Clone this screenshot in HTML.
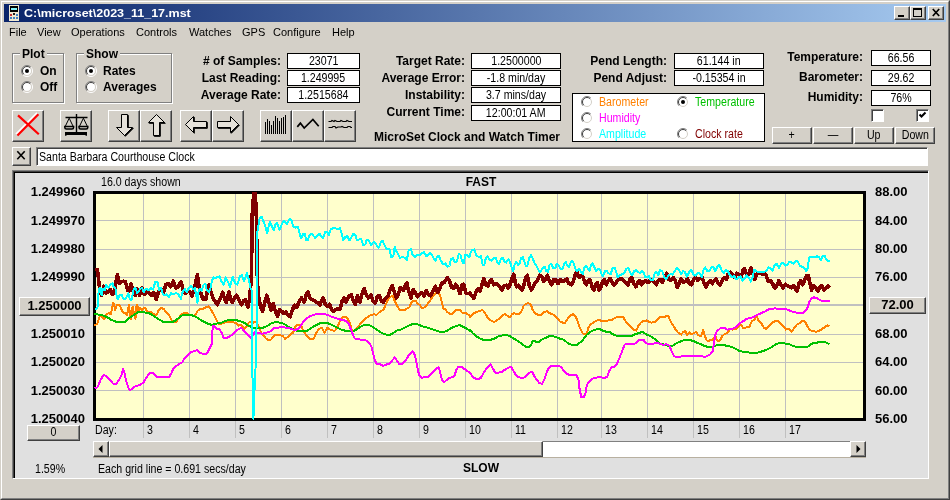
<!DOCTYPE html><html><head><meta charset="utf-8"><title>MicroSet</title><style>
html,body{margin:0;padding:0;}
body{width:950px;height:500px;overflow:hidden;background:#D4D0C8;font-family:"Liberation Sans",sans-serif;font-size:12px;color:#000;position:relative;}
.abs{position:absolute;}
#w{position:absolute;left:0;top:0;width:950px;height:500px;will-change:transform;}
.t{position:absolute;white-space:nowrap;line-height:14px;height:14px;font-size:12px;}
.n{transform:scaleX(.885);transform-origin:0 50%;}
.ns{display:inline-block;transform:scaleX(.885);}
.m{font-size:11px;}
.b{font-weight:bold;}
.r{text-align:right;}
.c{text-align:center;}
.fld{position:absolute;background:#fff;border:1px solid #000;box-sizing:border-box;text-align:center;font-size:12px;line-height:14px;white-space:nowrap;overflow:hidden;}
.btn{position:absolute;box-sizing:border-box;background:#D4D0C8;border:1px solid;border-color:#fff #404040 #404040 #fff;box-shadow:inset -1px -1px 0 #808080;text-align:center;white-space:nowrap;}
.grp{position:absolute;box-sizing:border-box;border:1px solid #808080;box-shadow:1px 1px 0 #fff, inset 1px 1px 0 #fff;}
.rad{position:absolute;width:12px;height:12px;}
svg{position:absolute;overflow:visible;}
</style></head><body><div id="w">
<div class="abs" style="left:0;top:0;width:950px;height:500px;box-sizing:border-box;border:1px solid;border-color:#D4D0C8 #404040 #404040 #D4D0C8;"></div>
<div class="abs" style="left:1px;top:1px;width:948px;height:498px;box-sizing:border-box;border:1px solid;border-color:#fff #808080 #808080 #fff;"></div>
<div class="abs" style="left:4px;top:4px;width:942px;height:18px;background:linear-gradient(to right,#0A246A 0%,#A6CAF0 100%);"></div>
<svg style="left:9px;top:5px" width="10" height="16" viewBox="0 0 10 16" shape-rendering="crispEdges"><rect x="0" y="0" width="10" height="16" fill="#F0E8D0"/><rect x="1" y="1" width="8" height="6" fill="#000"/><rect x="2" y="3" width="6" height="2" fill="#80F0F8"/><rect x="1" y="9" width="2" height="2" fill="#C03030"/><rect x="4" y="8" width="2" height="2" fill="#202020"/><rect x="7" y="9" width="2" height="2" fill="#4080C0"/><rect x="1" y="12" width="2" height="2" fill="#4080C0"/><rect x="4" y="12" width="2" height="2" fill="#4080C0"/><rect x="7" y="12" width="2" height="2" fill="#4080C0"/></svg>
<div class="t b" style="left:24px;top:6px;color:#fff;font-size:11.500px;transform:scaleX(1.087);transform-origin:0 50%;">C:\microset\2023_11_17.mst</div>
<div class="btn" style="left:894px;top:6px;width:16px;height:14px;"></div><div class="abs" style="left:898px;top:15px;width:6px;height:2px;background:#000"></div>
<div class="btn" style="left:910px;top:6px;width:16px;height:14px;"></div><div class="abs" style="left:913px;top:8px;width:9px;height:9px;box-sizing:border-box;border:1px solid #000;border-top-width:2px"></div>
<div class="btn" style="left:928px;top:6px;width:16px;height:14px;"></div><svg style="left:932px;top:9px" width="8" height="7" viewBox="0 0 8 7"><path d="M0.8 0 L7.2 7 M7.2 0 L0.8 7" stroke="#000" stroke-width="1.7" fill="none"/></svg>
<div class="t m" style="left:9px;top:25px;">File</div>
<div class="t m" style="left:37px;top:25px;">View</div>
<div class="t m" style="left:71px;top:25px;">Operations</div>
<div class="t m" style="left:136px;top:25px;">Controls</div>
<div class="t m" style="left:189px;top:25px;">Watches</div>
<div class="t m" style="left:242px;top:25px;">GPS</div>
<div class="t m" style="left:273px;top:25px;">Configure</div>
<div class="t m" style="left:332px;top:25px;">Help</div>
<div class="grp" style="left:12px;top:53px;width:52px;height:50px;"></div>
<div class="t b" style="left:20px;top:47px;background:#D4D0C8;padding:0 2px;">Plot</div>
<svg class="rad" style="left:21px;top:65px" width="12" height="12" viewBox="0 0 12 12"><circle cx="6" cy="6" r="4.5" fill="#fff" stroke="none"/><path d="M2.1 9.9 A5.5 5.5 0 0 1 9.9 2.1" fill="none" stroke="#808080" stroke-width="1"/><path d="M2.8 9.2 A4.5 4.5 0 0 1 9.2 2.8" fill="none" stroke="#404040" stroke-width="1"/><path d="M9.9 2.1 A5.5 5.5 0 0 1 2.1 9.9" fill="none" stroke="#fff" stroke-width="1"/><path d="M9.2 2.8 A4.5 4.5 0 0 1 2.8 9.2" fill="none" stroke="#D4D0C8" stroke-width="1"/><circle cx="6" cy="6" r="2" fill="#000"/></svg>
<div class="t b" style="left:40px;top:64px;">On</div>
<svg class="rad" style="left:21px;top:81px" width="12" height="12" viewBox="0 0 12 12"><circle cx="6" cy="6" r="4.5" fill="#fff" stroke="none"/><path d="M2.1 9.9 A5.5 5.5 0 0 1 9.9 2.1" fill="none" stroke="#808080" stroke-width="1"/><path d="M2.8 9.2 A4.5 4.5 0 0 1 9.2 2.8" fill="none" stroke="#404040" stroke-width="1"/><path d="M9.9 2.1 A5.5 5.5 0 0 1 2.1 9.9" fill="none" stroke="#fff" stroke-width="1"/><path d="M9.2 2.8 A4.5 4.5 0 0 1 2.8 9.2" fill="none" stroke="#D4D0C8" stroke-width="1"/></svg>
<div class="t b" style="left:40px;top:80px;">Off</div>
<div class="grp" style="left:76px;top:53px;width:96px;height:50px;"></div>
<div class="t b" style="left:84px;top:47px;background:#D4D0C8;padding:0 2px;">Show</div>
<svg class="rad" style="left:85px;top:65px" width="12" height="12" viewBox="0 0 12 12"><circle cx="6" cy="6" r="4.5" fill="#fff" stroke="none"/><path d="M2.1 9.9 A5.5 5.5 0 0 1 9.9 2.1" fill="none" stroke="#808080" stroke-width="1"/><path d="M2.8 9.2 A4.5 4.5 0 0 1 9.2 2.8" fill="none" stroke="#404040" stroke-width="1"/><path d="M9.9 2.1 A5.5 5.5 0 0 1 2.1 9.9" fill="none" stroke="#fff" stroke-width="1"/><path d="M9.2 2.8 A4.5 4.5 0 0 1 2.8 9.2" fill="none" stroke="#D4D0C8" stroke-width="1"/><circle cx="6" cy="6" r="2" fill="#000"/></svg>
<div class="t b" style="left:103px;top:64px;">Rates</div>
<svg class="rad" style="left:85px;top:81px" width="12" height="12" viewBox="0 0 12 12"><circle cx="6" cy="6" r="4.5" fill="#fff" stroke="none"/><path d="M2.1 9.9 A5.5 5.5 0 0 1 9.9 2.1" fill="none" stroke="#808080" stroke-width="1"/><path d="M2.8 9.2 A4.5 4.5 0 0 1 9.2 2.8" fill="none" stroke="#404040" stroke-width="1"/><path d="M9.9 2.1 A5.5 5.5 0 0 1 2.1 9.9" fill="none" stroke="#fff" stroke-width="1"/><path d="M9.2 2.8 A4.5 4.5 0 0 1 2.8 9.2" fill="none" stroke="#D4D0C8" stroke-width="1"/></svg>
<div class="t b" style="left:103px;top:80px;">Averages</div>
<div class="t b r" style="left:161px;width:120px;top:54px;"># of Samples:</div>
<div class="fld" style="left:287px;top:53px;width:73px;height:16px;"><span class="ns">23071</span></div>
<div class="t b r" style="left:161px;width:120px;top:71px;">Last Reading:</div>
<div class="fld" style="left:287px;top:70px;width:73px;height:16px;"><span class="ns">1.249995</span></div>
<div class="t b r" style="left:161px;width:120px;top:88px;">Average Rate:</div>
<div class="fld" style="left:287px;top:87px;width:73px;height:16px;"><span class="ns">1.2515684</span></div>
<div class="t b r" style="left:345px;width:120px;top:54px;">Target Rate:</div>
<div class="fld" style="left:471px;top:53px;width:90px;height:16px;"><span class="ns">1.2500000</span></div>
<div class="t b r" style="left:345px;width:120px;top:71px;">Average Error:</div>
<div class="fld" style="left:471px;top:70px;width:90px;height:16px;"><span class="ns">-1.8 min/day</span></div>
<div class="t b r" style="left:345px;width:120px;top:88px;">Instability:</div>
<div class="fld" style="left:471px;top:87px;width:90px;height:16px;"><span class="ns">3.7 mins/day</span></div>
<div class="t b r" style="left:345px;width:120px;top:105px;">Current Time:</div>
<div class="fld" style="left:471px;top:105px;width:90px;height:16px;"><span class="ns">12:00:01 AM</span></div>
<div class="t b" style="left:374px;top:130px;">MicroSet Clock and Watch Timer</div>
<div class="t b r" style="left:547px;width:120px;top:54px;">Pend Length:</div>
<div class="fld" style="left:674px;top:53px;width:90px;height:16px;"><span class="ns">61.144 in</span></div>
<div class="t b r" style="left:547px;width:120px;top:71px;">Pend Adjust:</div>
<div class="fld" style="left:674px;top:70px;width:90px;height:16px;"><span class="ns">-0.15354 in</span></div>
<div class="abs" style="left:572px;top:93px;width:193px;height:49px;box-sizing:border-box;background:#fff;border:1px solid #000;"></div>
<svg class="rad" style="left:581px;top:96px" width="12" height="12" viewBox="0 0 12 12"><circle cx="6" cy="6" r="4.5" fill="#fff" stroke="none"/><path d="M2.1 9.9 A5.5 5.5 0 0 1 9.9 2.1" fill="none" stroke="#808080" stroke-width="1"/><path d="M2.8 9.2 A4.5 4.5 0 0 1 9.2 2.8" fill="none" stroke="#404040" stroke-width="1"/><path d="M9.9 2.1 A5.5 5.5 0 0 1 2.1 9.9" fill="none" stroke="#fff" stroke-width="1"/><path d="M9.2 2.8 A4.5 4.5 0 0 1 2.8 9.2" fill="none" stroke="#D4D0C8" stroke-width="1"/></svg>
<div class="t n" style="left:599px;top:95px;color:#FF8000;">Barometer</div>
<svg class="rad" style="left:677px;top:96px" width="12" height="12" viewBox="0 0 12 12"><circle cx="6" cy="6" r="4.5" fill="#fff" stroke="none"/><path d="M2.1 9.9 A5.5 5.5 0 0 1 9.9 2.1" fill="none" stroke="#808080" stroke-width="1"/><path d="M2.8 9.2 A4.5 4.5 0 0 1 9.2 2.8" fill="none" stroke="#404040" stroke-width="1"/><path d="M9.9 2.1 A5.5 5.5 0 0 1 2.1 9.9" fill="none" stroke="#fff" stroke-width="1"/><path d="M9.2 2.8 A4.5 4.5 0 0 1 2.8 9.2" fill="none" stroke="#D4D0C8" stroke-width="1"/><circle cx="6" cy="6" r="2" fill="#000"/></svg>
<div class="t n" style="left:695px;top:95px;color:#00C000;">Temperature</div>
<svg class="rad" style="left:581px;top:112px" width="12" height="12" viewBox="0 0 12 12"><circle cx="6" cy="6" r="4.5" fill="#fff" stroke="none"/><path d="M2.1 9.9 A5.5 5.5 0 0 1 9.9 2.1" fill="none" stroke="#808080" stroke-width="1"/><path d="M2.8 9.2 A4.5 4.5 0 0 1 9.2 2.8" fill="none" stroke="#404040" stroke-width="1"/><path d="M9.9 2.1 A5.5 5.5 0 0 1 2.1 9.9" fill="none" stroke="#fff" stroke-width="1"/><path d="M9.2 2.8 A4.5 4.5 0 0 1 2.8 9.2" fill="none" stroke="#D4D0C8" stroke-width="1"/></svg>
<div class="t n" style="left:599px;top:111px;color:#FF00FF;">Humidity</div>
<svg class="rad" style="left:581px;top:128px" width="12" height="12" viewBox="0 0 12 12"><circle cx="6" cy="6" r="4.5" fill="#fff" stroke="none"/><path d="M2.1 9.9 A5.5 5.5 0 0 1 9.9 2.1" fill="none" stroke="#808080" stroke-width="1"/><path d="M2.8 9.2 A4.5 4.5 0 0 1 9.2 2.8" fill="none" stroke="#404040" stroke-width="1"/><path d="M9.9 2.1 A5.5 5.5 0 0 1 2.1 9.9" fill="none" stroke="#fff" stroke-width="1"/><path d="M9.2 2.8 A4.5 4.5 0 0 1 2.8 9.2" fill="none" stroke="#D4D0C8" stroke-width="1"/></svg>
<div class="t n" style="left:599px;top:127px;color:#00FFFF;">Amplitude</div>
<svg class="rad" style="left:677px;top:128px" width="12" height="12" viewBox="0 0 12 12"><circle cx="6" cy="6" r="4.5" fill="#fff" stroke="none"/><path d="M2.1 9.9 A5.5 5.5 0 0 1 9.9 2.1" fill="none" stroke="#808080" stroke-width="1"/><path d="M2.8 9.2 A4.5 4.5 0 0 1 9.2 2.8" fill="none" stroke="#404040" stroke-width="1"/><path d="M9.9 2.1 A5.5 5.5 0 0 1 2.1 9.9" fill="none" stroke="#fff" stroke-width="1"/><path d="M9.2 2.8 A4.5 4.5 0 0 1 2.8 9.2" fill="none" stroke="#D4D0C8" stroke-width="1"/></svg>
<div class="t n" style="left:695px;top:127px;color:#800000;">Clock rate</div>
<div class="t b r" style="left:743px;width:120px;top:50px;">Temperature:</div>
<div class="fld" style="left:871px;top:50px;width:60px;height:16px;"><span class="ns">66.56</span></div>
<div class="t b r" style="left:743px;width:120px;top:70px;">Barometer:</div>
<div class="fld" style="left:871px;top:70px;width:60px;height:16px;"><span class="ns">29.62</span></div>
<div class="t b r" style="left:743px;width:120px;top:90px;">Humidity:</div>
<div class="fld" style="left:871px;top:90px;width:60px;height:16px;"><span class="ns">76%</span></div>
<div class="abs" style="left:871px;top:109px;width:13px;height:13px;box-sizing:border-box;background:#fff;border:1px solid;border-color:#808080 #fff #fff #808080;box-shadow:inset 1px 1px 0 #404040;"></div>
<div class="abs" style="left:916px;top:109px;width:13px;height:13px;box-sizing:border-box;background:#fff;border:1px solid;border-color:#808080 #fff #fff #808080;box-shadow:inset 1px 1px 0 #404040;"></div><svg style="left:919px;top:112px" width="7" height="7" viewBox="0 0 7 7"><path d="M0.5 2.5 L2.5 4.5 L6.5 0.5" stroke="#000" stroke-width="2" fill="none"/></svg>
<div class="btn" style="left:772px;top:127px;width:40px;height:17px;line-height:14px;"><span class="ns">+</span></div>
<div class="btn" style="left:813px;top:127px;width:40px;height:17px;line-height:14px;"><span class="ns">&mdash;</span></div>
<div class="btn" style="left:854px;top:127px;width:40px;height:17px;line-height:14px;"><span class="ns">Up</span></div>
<div class="btn" style="left:895px;top:127px;width:40px;height:17px;line-height:14px;"><span class="ns">Down</span></div>
<div class="btn" style="left:12px;top:110px;width:32px;height:32px;"></div>
<svg style="left:12px;top:110px" width="32" height="32" viewBox="0 0 32 32"><path d="M26.400 4.200 L5.400 25.400" stroke="#fff" stroke-width="2" fill="none" transform="translate(-1.300,-1.300)"/><path d="M6 5.4 L26.8 24.3 M26.4 4.2 L5.4 25.4" stroke="#FF0000" stroke-width="2.2" fill="none"/></svg>
<div class="btn" style="left:60px;top:110px;width:32px;height:32px;"></div>
<svg style="left:60px;top:110px" width="32" height="32" viewBox="0 0 32 32"><path d="M16.500 4 V22.500 M5.500 7.500 H27.500" stroke="#000" stroke-width="1.4" fill="none"/><path d="M9.200 8.200 L5.200 16.500 M9.200 8.200 L13.200 16.500 M23.400 8.200 L19.400 16.500 M23.400 8.200 L27.400 16.500" stroke="#000" stroke-width="1" fill="none"/><path d="M4.800 16.500 H13.600 V17.500 Q13.600 19 12 19 H6.400 Q4.800 19 4.800 17.500 Z M19 16.500 H27.800 V17.500 Q27.800 19 26.200 19 H20.600 Q19 19 19 17.500 Z" fill="#D4D0C8" stroke="#000" stroke-width="1.5"/><path d="M5 22 H27 V25.800 H25.500 V25 H6.500 V25.800 H5 Z" fill="#000"/></svg>
<div class="btn" style="left:108px;top:110px;width:32px;height:32px;"></div>
<svg style="left:108px;top:110px" width="32" height="32" viewBox="0 0 32 32"><path d="M13.500 4.500 H19.500 V17.500 H24.500 L16.500 25.500 L8.500 17.500 H13.500 Z" fill="#000" stroke="#000" stroke-width="1" transform="translate(0.800,0.800)"/><path d="M13.500 4.500 H19.500 V17.500 H24.500 L16.500 25.500 L8.500 17.500 H13.500 Z" fill="#E6E2DA" stroke="#000" stroke-width="1"/></svg>
<div class="btn" style="left:140px;top:110px;width:32px;height:32px;"></div>
<svg style="left:140px;top:110px" width="32" height="32" viewBox="0 0 32 32"><path d="M13.500 25.500 H19.500 V12.500 H24.500 L16.500 4.500 L8.500 12.500 H13.500 Z" fill="#000" stroke="#000" stroke-width="1" transform="translate(0.800,0.800)"/><path d="M13.500 25.500 H19.500 V12.500 H24.500 L16.500 4.500 L8.500 12.500 H13.500 Z" fill="#E6E2DA" stroke="#000" stroke-width="1"/></svg>
<div class="btn" style="left:180px;top:110px;width:32px;height:32px;"></div>
<svg style="left:180px;top:110px" width="32" height="32" viewBox="0 0 32 32"><path d="M26.500 11.500 V17.500 H13.500 V22.500 L5.500 14.500 L13.500 6.500 V11.500 Z" fill="#000" stroke="#000" stroke-width="1" transform="translate(0.800,0.800)"/><path d="M26.500 11.500 V17.500 H13.500 V22.500 L5.500 14.500 L13.500 6.500 V11.500 Z" fill="#E6E2DA" stroke="#000" stroke-width="1"/></svg>
<div class="btn" style="left:212px;top:110px;width:32px;height:32px;"></div>
<svg style="left:212px;top:110px" width="32" height="32" viewBox="0 0 32 32"><path d="M5.500 11.500 V17.500 H18.500 V22.500 L26.500 14.500 L18.500 6.500 V11.500 Z" fill="#000" stroke="#000" stroke-width="1" transform="translate(0.800,0.800)"/><path d="M5.500 11.500 V17.500 H18.500 V22.500 L26.500 14.500 L18.500 6.500 V11.500 Z" fill="#E6E2DA" stroke="#000" stroke-width="1"/></svg>
<div class="btn" style="left:260px;top:110px;width:32px;height:32px;"></div>
<svg style="left:260px;top:110px" width="32" height="32" viewBox="0 0 32 32"><g shape-rendering="crispEdges"><rect x="5" y="12" width="1" height="12" fill="#000"/><rect x="7" y="9" width="1" height="15" fill="#000"/><rect x="9" y="11" width="1" height="13" fill="#000"/><rect x="11" y="15" width="1" height="9" fill="#000"/><rect x="13" y="11" width="1" height="13" fill="#000"/><rect x="15" y="6" width="1" height="18" fill="#000"/><rect x="17" y="8" width="1" height="16" fill="#000"/><rect x="19" y="11" width="1" height="13" fill="#000"/><rect x="21" y="8" width="1" height="16" fill="#000"/><rect x="23" y="7" width="1" height="17" fill="#000"/><rect x="25" y="5" width="1" height="19" fill="#000"/></g></svg>
<div class="btn" style="left:292px;top:110px;width:32px;height:32px;"></div>
<svg style="left:292px;top:110px" width="32" height="32" viewBox="0 0 32 32"><path d="M5.300 16.900 L8.400 13.200 L12.200 18 L20.900 9.400 L26.700 16.300" stroke="#000" stroke-width="1.7" fill="none"/></svg>
<div class="btn" style="left:324px;top:110px;width:32px;height:32px;"></div>
<svg style="left:324px;top:110px" width="32" height="32" viewBox="0 0 32 32"><path d="M4.500 11.500 H7 L8 10.500 L10 11.500 L11 10.500 L13 11.500 H16 L17 10.500 L19 11.500 H22 L23 10.500 L25 11.500 H28 M4.500 17.500 H8 L9 16.500 H11 L12 18 L14 17 H17 L18 16.500 L20 17.500 H23 L24 16.500 L26 16.500 L27 17.500 H28" stroke="#000" stroke-width="1.2" fill="none"/></svg>
<div class="btn" style="left:12px;top:147px;width:19px;height:19px;"></div>
<svg style="left:16px;top:150px" width="10" height="10" viewBox="0 0 10 10"><path d="M1.300 1.300 L8.700 9.300 M8.700 1.300 L1.300 9.300" stroke="#000" stroke-width="1.600" fill="none"/></svg>
<div class="abs" style="left:36px;top:147px;width:892px;height:19px;box-sizing:border-box;background:#fff;border:1px solid;border-color:#808080 #fff #fff #808080;box-shadow:inset 1px 1px 0 #404040;"></div>
<div class="t n" style="left:39px;top:150px;">Santa Barbara Courthouse Clock</div>
<div class="abs" style="left:12px;top:170px;width:917px;height:309px;box-sizing:border-box;background:#E0E0E0;border:1px solid;border-color:#808080 #fff #fff #808080;box-shadow:inset 1px 1px 0 #404040, inset 2px 2px 0 #000;"></div>
<div class="t n" style="left:101px;top:175px;">16.0 days shown</div>
<div class="t b c" style="left:431px;width:100px;top:175px;">FAST</div>
<div class="t b c" style="left:431px;width:100px;top:461px;">SLOW</div>
<div class="t n" style="left:35px;top:462px;">1.59%</div>
<div class="t n" style="left:98px;top:462px;">Each grid line = 0.691 secs/day</div>
<div class="t b r" style="left:14px;width:71px;top:185px;font-size:13px;">1.249960</div>
<div class="t b" style="left:875px;top:185px;font-size:13px;">88.00</div>
<div class="t b r" style="left:14px;width:71px;top:214px;font-size:13px;">1.249970</div>
<div class="t b" style="left:875px;top:214px;font-size:13px;">84.00</div>
<div class="t b r" style="left:14px;width:71px;top:242px;font-size:13px;">1.249980</div>
<div class="t b" style="left:875px;top:242px;font-size:13px;">80.00</div>
<div class="t b r" style="left:14px;width:71px;top:270px;font-size:13px;">1.249990</div>
<div class="t b" style="left:875px;top:270px;font-size:13px;">76.00</div>
<div class="btn b" style="left:19px;top:297px;width:71px;height:19px;line-height:16px;font-size:13px;">1.250000</div>
<div class="btn b" style="left:869px;top:297px;width:57px;height:17px;line-height:14px;font-size:13px;">72.00</div>
<div class="t b r" style="left:14px;width:71px;top:327px;font-size:13px;">1.250010</div>
<div class="t b" style="left:875px;top:327px;font-size:13px;">68.00</div>
<div class="t b r" style="left:14px;width:71px;top:355px;font-size:13px;">1.250020</div>
<div class="t b" style="left:875px;top:355px;font-size:13px;">64.00</div>
<div class="t b r" style="left:14px;width:71px;top:384px;font-size:13px;">1.250030</div>
<div class="t b" style="left:875px;top:384px;font-size:13px;">60.00</div>
<div class="t b r" style="left:14px;width:71px;top:412px;font-size:13px;">1.250040</div>
<div class="t b" style="left:875px;top:412px;font-size:13px;">56.00</div>
<div class="btn" style="left:27px;top:425px;width:53px;height:16px;line-height:13px;"><span class="ns">0</span></div>
<div class="t n" style="left:95px;top:423px;">Day:</div>
<div class="abs" style="left:93px;top:191px;width:773px;height:230px;box-sizing:border-box;background:#FFFFCC;border:3px solid #000;"></div>
<svg style="left:0;top:0" width="950" height="500" viewBox="0 0 950 500" shape-rendering="crispEdges"><rect x="143" y="194" width="1" height="244" fill="#C0C0C0"/><rect x="189" y="194" width="1" height="244" fill="#C0C0C0"/><rect x="235" y="194" width="1" height="244" fill="#C0C0C0"/><rect x="281" y="194" width="1" height="244" fill="#C0C0C0"/><rect x="327" y="194" width="1" height="244" fill="#C0C0C0"/><rect x="373" y="194" width="1" height="244" fill="#C0C0C0"/><rect x="419" y="194" width="1" height="244" fill="#C0C0C0"/><rect x="465" y="194" width="1" height="244" fill="#C0C0C0"/><rect x="511" y="194" width="1" height="244" fill="#C0C0C0"/><rect x="557" y="194" width="1" height="244" fill="#C0C0C0"/><rect x="601" y="194" width="1" height="244" fill="#C0C0C0"/><rect x="647" y="194" width="1" height="244" fill="#C0C0C0"/><rect x="693" y="194" width="1" height="244" fill="#C0C0C0"/><rect x="739" y="194" width="1" height="244" fill="#C0C0C0"/><rect x="785" y="194" width="1" height="244" fill="#C0C0C0"/><rect x="96" y="220" width="767" height="1" fill="#C0C0C0"/><rect x="96" y="249" width="767" height="1" fill="#C0C0C0"/><rect x="96" y="277" width="767" height="1" fill="#C0C0C0"/><rect x="96" y="304" width="767" height="2" fill="#C0C0C0"/><rect x="96" y="334" width="767" height="1" fill="#C0C0C0"/><rect x="96" y="362" width="767" height="1" fill="#C0C0C0"/><rect x="96" y="390" width="767" height="1" fill="#C0C0C0"/><rect x="93" y="418" width="773" height="3" fill="#000"/><clipPath id="cp"><rect x="94" y="191" width="771" height="230"/></clipPath><g clip-path="url(#cp)" fill="none" stroke-linejoin="round"><polyline points="94.1,325.4 97.1,324.1 98.3,320.3 99.6,316.9 101.3,315.3 102.5,317.8 104.2,319.1 105.5,316.9 106.7,314.0 108.8,313.2 110.9,314.0 112.2,308.1 113.1,302.6 114.1,303.5 114.9,309.8 116.0,308.1 116.8,305.2 118.9,304.7 120.6,307.3 122.3,311.1 124.0,312.7 125.7,313.2 126.9,314.8 128.2,310.2 128.8,304.7 129.6,310.2 130.3,315.3 130.9,319.1 131.6,315.3 132.3,307.7 133.1,306.8 133.7,312.7 134.5,316.1 135.4,319.1 136.0,314.4 136.6,304.7 137.5,305.6 138.1,309.8 139.2,310.6 140.2,308.1 141.3,309.4 142.5,310.2 144.2,307.7 145.5,308.5 146.7,311.1 148.0,311.9 149.3,311.7 150.9,312.1 152.6,313.2 154.3,314.4 156.0,314.8 157.3,314.0 158.5,310.2 160.2,308.5 161.9,308.4 163.6,308.7 164.8,310.6 166.5,312.3 168.6,314.4 170.3,317.8 171.6,320.3 173.2,321.6 176.3,321.6 178.4,318.4 181.6,314.2 184.7,312.7 187.3,313.2 190.0,315.3 193.2,315.7 195.3,315.3 197.4,311.1 199.5,309.4 202.6,308.9 205.8,307.3 208.9,306.4 211.1,310.0 214.2,315.3 216.3,319.5 218.4,323.7 221.6,323.7 224.7,322.6 227.9,321.6 231.1,321.6 234.2,322.6 236.3,322.6 238.4,325.8 240.5,324.7 242.6,326.8 244.7,328.9 246.8,325.8 248.9,322.6 251.1,321.6 253.2,322.6 255.3,321.6 257.4,323.7 259.5,328.9 261.6,333.2 263.7,335.3 265.8,338.4 267.9,340.1 271.1,339.5 273.2,336.3 275.3,334.6 278.4,335.3 280.0,335.4 282.5,335.8 285.3,338.9 288.0,336.8 290.5,334.1 293.1,332.6 295.8,325.7 298.5,324.8 301.1,325.7 303.2,330.5 305.3,333.7 307.4,336.8 309.5,338.9 313.7,338.9 315.8,333.7 317.9,330.5 320.0,328.4 322.1,327.8 324.2,332.6 325.9,330.5 327.4,327.8 330.1,329.5 332.6,330.5 335.2,330.5 337.3,327.4 339.4,322.1 341.5,318.9 343.2,316.8 345.7,316.8 347.8,318.9 349.9,323.2 352.0,330.5 354.7,330.5 357.5,327.8 360.0,324.2 362.5,321.1 365.3,318.9 368.0,316.8 370.5,315.2 373.7,314.3 376.8,314.7 379.4,312.2 382.1,310.5 384.2,308.4 386.3,303.2 388.4,298.9 390.5,296.8 392.6,295.8 394.7,301.1 396.8,305.3 398.9,308.8 401.1,310.5 404.2,310.1 407.4,308.4 409.5,307.4 410.9,303.2 413.1,301.1 415.8,301.1 417.9,303.8 420.0,305.3 422.1,308.0 424.2,307.4 427.4,304.2 429.9,301.1 432.0,297.9 434.1,294.7 436.8,292.6 439.6,294.1 441.1,298.9 443.2,308.4 445.3,309.5 447.4,312.2 450.1,313.7 452.6,313.7 455.2,310.5 457.9,309.5 460.0,310.1 462.1,312.6 465.3,312.6 468.4,314.7 470.0,316.7 473.2,313.8 476.3,312.1 479.5,311.1 482.6,310.0 485.2,313.2 487.9,318.4 491.1,320.5 494.2,322.2 496.3,320.5 499.1,318.8 502.0,316.3 504.7,313.8 506.8,315.3 509.6,317.4 512.1,314.2 514.2,313.2 516.3,313.8 518.8,314.2 521.6,311.1 523.7,305.8 525.8,303.7 528.5,303.3 530.6,304.1 532.7,310.0 535.3,313.2 538.4,315.3 541.6,314.6 544.1,312.1 546.8,311.1 549.6,313.2 552.1,314.2 554.6,315.3 557.4,318.4 560.1,321.6 562.6,322.6 565.2,322.6 567.9,318.4 570.6,315.3 573.2,314.2 575.7,316.7 577.8,321.6 579.9,327.9 582.6,333.2 585.4,334.8 586.8,333.2 588.3,327.9 590.4,324.7 593.2,322.6 596.3,320.9 598.8,319.5 600.5,320.5 603.7,320.9 606.8,320.9 609.4,320.1 612.1,320.1 614.8,318.0 617.4,316.7 620.5,316.7 623.3,317.4 625.4,320.9 627.9,323.7 631.1,327.3 633.8,330.0 636.3,330.6 638.4,325.8 640.9,322.6 643.7,320.9 646.4,320.5 648.9,321.6 651.5,322.6 654.2,322.2 656.9,320.5 660.0,316.9 663.2,317.4 665.9,316.3 668.4,315.9 670.5,321.2 672.6,324.7 675.2,328.9 677.9,332.5 681.1,334.6 683.2,332.1 685.3,331.1 687.4,335.3 689.5,332.1 691.6,334.2 693.7,333.2 696.2,332.1 698.3,335.3 701.1,335.9 703.2,330.0 704.6,335.3 706.7,340.5 709.5,340.5 712.6,340.1 715.2,335.9 717.3,340.5 720.0,340.5 722.1,336.3 724.8,333.8 727.4,333.2 729.9,328.9 732.6,329.6 735.8,328.9 738.9,325.8 741.1,324.7 743.2,327.9 746.3,327.5 749.5,326.8 751.6,321.6 754.3,319.5 756.8,316.3 758.9,321.2 761.5,323.7 764.2,327.9 766.3,328.9 769.1,326.2 771.6,323.3 774.7,321.2 777.9,320.5 780.4,323.3 783.2,326.2 785.9,329.6 788.8,328.9 791.6,331.5 794.3,327.9 796.8,324.7 798.9,323.7 802.1,320.5 804.8,321.2 807.4,326.2 809.9,330.0 812.6,331.1 815.8,331.7 818.9,331.1 822.1,328.9 825.3,326.8 827.4,325.4 829.5,326.2" stroke="#FF8000" stroke-width="2"/><polyline points="94.1,314.4 96.2,313.6 98.7,314.8 101.3,315.1 103.8,315.7 106.3,316.8 108.8,318.2 111.4,319.9 113.9,321.0 117.3,322.0 120.6,322.2 124.0,322.0 125.7,321.6 127.4,319.9 129.1,318.2 131.2,316.8 133.3,315.3 135.8,313.6 137.9,312.3 140.4,311.7 142.5,312.1 145.1,312.6 147.6,312.9 150.1,313.7 152.6,315.3 155.2,316.8 157.7,318.6 160.2,320.1 162.7,321.6 165.3,322.0 168.6,322.0 172.0,322.0 174.2,321.2 177.4,319.1 180.5,316.3 183.7,314.8 186.8,314.6 190.0,314.8 193.2,315.7 196.3,316.9 199.5,319.1 202.6,321.2 205.8,322.6 208.9,324.1 212.1,324.9 215.3,323.7 218.4,323.3 221.6,322.6 224.7,321.2 227.9,320.1 231.1,319.9 235.3,320.1 238.4,320.7 241.6,321.6 244.7,323.1 247.9,325.4 251.1,326.8 254.2,327.9 258.4,328.3 262.6,327.9 266.8,326.2 270.0,324.1 273.2,322.6 276.3,322.2 279.5,322.6 280.0,322.7 283.2,323.6 286.3,325.3 289.5,327.4 292.6,329.1 295.8,330.5 298.9,330.9 303.2,330.9 307.4,330.7 310.5,328.4 313.7,326.3 316.8,324.8 320.0,323.2 323.2,322.7 326.3,322.7 329.5,323.8 332.6,325.3 335.8,326.9 338.9,328.4 342.1,329.9 345.3,330.7 349.5,331.2 352.6,331.6 355.8,329.9 358.9,327.8 362.1,325.7 365.3,324.8 368.4,324.8 371.6,326.3 374.7,328.4 377.9,330.5 381.1,332.6 384.2,334.1 387.4,334.7 390.5,334.7 393.7,332.6 396.8,330.5 400.0,329.9 403.2,328.4 406.3,326.9 409.5,325.3 412.6,324.0 415.8,323.8 418.9,324.8 422.1,326.3 425.3,326.9 428.4,328.0 431.6,329.1 434.7,330.1 437.9,331.2 441.1,332.0 444.2,332.0 447.4,330.5 450.5,328.4 453.7,326.9 456.8,325.7 460.0,325.3 463.2,326.9 466.3,328.4 469.5,330.5 470.0,329.9 473.2,333.7 476.3,336.2 479.5,338.3 482.6,339.6 486.8,339.6 491.1,339.6 494.2,338.9 497.4,336.8 500.5,335.8 503.7,335.2 506.8,335.2 510.0,336.2 513.2,338.3 516.3,340.0 519.5,342.1 522.6,344.6 525.8,346.7 528.9,347.4 531.1,345.3 532.7,341.1 534.8,341.1 536.9,342.5 539.5,341.7 542.6,338.9 545.8,337.9 548.9,336.2 552.1,335.8 555.3,336.8 558.4,338.3 561.6,338.9 564.7,340.4 567.9,343.2 571.1,344.6 574.2,344.6 577.4,344.6 580.5,342.1 583.7,338.9 586.8,334.7 590.0,332.0 593.2,330.5 596.3,329.5 599.5,329.1 602.6,330.5 605.8,331.6 608.9,331.6 612.1,333.7 615.3,335.4 618.4,335.8 621.6,335.8 626.8,335.8 632.1,335.8 635.3,334.1 638.4,333.3 641.6,332.0 643.7,332.6 646.8,334.7 650.0,335.8 653.2,337.9 656.3,340.4 659.5,343.2 660.0,343.7 663.2,344.3 666.3,345.2 669.5,346.4 672.6,345.8 675.8,343.7 678.9,342.2 682.1,340.9 685.3,339.9 688.4,339.9 691.6,340.5 694.7,341.6 697.9,343.1 701.1,344.3 704.2,345.8 707.4,346.8 710.5,346.8 713.7,346.4 716.8,345.2 720.0,344.7 723.2,344.7 726.3,345.8 729.5,346.4 732.6,347.3 735.8,348.9 738.9,350.6 742.1,351.5 745.3,352.1 748.4,352.5 751.6,352.7 754.7,352.7 757.9,352.5 761.1,351.7 764.2,350.6 767.4,349.4 770.5,347.9 773.7,345.8 776.8,343.7 780.0,343.1 783.2,343.1 786.3,343.7 789.5,344.3 792.6,345.8 795.8,346.8 798.9,347.5 802.1,347.3 805.3,346.8 808.4,346.4 810.5,344.3 813.7,343.1 816.8,342.6 820.0,342.2 823.2,342.0 826.3,342.6 829.5,344.3" stroke="#00C000" stroke-width="2"/><polyline points="94.6,388.4 97.4,387.4 100.5,380.0 103.7,374.7 106.8,376.8 110.0,380.0 113.2,383.8 116.3,383.8 119.5,378.9 121.6,374.7 123.1,368.8 124.7,373.7 126.2,381.1 128.9,389.5 131.1,389.5 134.2,386.9 137.4,385.7 140.5,384.8 143.7,382.1 146.8,376.8 150.0,372.6 153.2,373.1 156.3,376.4 159.5,377.5 162.6,377.3 165.8,376.8 168.9,377.3 171.1,373.7 173.2,368.8 176.3,365.9 179.5,363.8 182.6,362.1 184.7,357.9 187.9,354.7 191.1,352.0 194.2,351.2 196.9,350.1 199.5,352.6 202.6,353.7 206.8,353.7 209.6,348.4 211.7,344.2 212.7,326.3 214.2,325.9 216.3,328.8 219.5,329.5 221.6,332.6 223.7,337.9 226.8,337.9 230.0,336.4 233.2,333.7 236.3,330.5 239.5,328.8 241.6,328.0 244.7,331.6 247.9,334.7 251.1,338.5 253.2,334.7 255.3,331.6 258.4,333.1 262.6,333.7 266.8,332.6 270.0,331.6 273.2,328.4 276.3,328.0 279.5,327.4 280.0,326.9 283.2,326.9 286.3,327.8 289.5,328.4 292.6,329.5 295.8,329.9 298.9,328.4 301.1,325.3 303.2,322.1 306.3,318.5 309.5,316.4 312.6,315.2 315.8,314.3 320.0,314.3 324.2,314.3 327.4,314.7 330.5,316.4 333.7,317.3 336.8,318.5 340.0,319.4 343.2,320.0 346.3,321.1 348.4,323.2 350.5,328.4 352.6,333.7 354.7,338.5 357.9,339.4 361.1,339.6 364.2,339.6 367.4,341.1 369.5,343.2 371.6,347.4 373.1,353.7 374.7,360.0 376.8,363.8 380.0,364.2 383.2,365.9 386.3,364.6 389.5,363.6 392.6,360.0 394.7,357.5 396.8,360.4 398.9,363.8 402.1,364.2 405.3,361.1 408.4,355.8 410.5,353.3 412.6,351.2 414.7,354.7 416.4,362.1 417.9,370.5 419.4,375.8 422.1,377.9 425.3,376.8 428.4,376.8 431.2,373.7 433.7,371.6 436.8,368.4 438.9,367.4 440.4,373.7 442.1,380.0 444.2,382.1 446.7,380.0 449.5,377.9 453.1,376.8 454.7,375.2 456.4,369.5 458.5,366.7 461.1,366.7 463.6,368.4 466.3,370.1 469.5,372.6 470.0,372.6 472.1,375.8 474.6,378.3 477.4,378.9 480.5,378.3 482.6,374.7 485.2,370.5 487.9,366.9 490.6,364.2 492.7,368.4 495.3,372.6 498.4,372.6 501.6,372.0 504.7,369.9 507.9,367.8 511.1,366.9 513.2,370.5 515.3,374.1 518.0,376.8 521.6,377.9 524.3,377.5 526.8,375.4 529.4,372.6 532.1,372.0 534.2,375.8 536.9,380.0 539.5,383.2 542.0,383.8 544.1,380.0 546.2,373.7 548.3,368.4 550.4,366.3 554.2,365.9 558.0,365.9 560.9,366.9 563.7,370.5 566.4,373.7 568.9,374.7 573.2,374.7 576.3,375.4 578.4,378.9 579.5,388.4 581.2,396.8 583.7,397.3 585.4,393.7 586.8,385.3 588.9,382.1 592.1,378.9 595.3,377.9 598.4,377.3 601.6,377.5 604.7,377.9 607.3,376.8 609.4,370.5 611.5,367.4 615.3,366.3 617.8,362.1 619.9,356.8 622.0,351.6 624.7,344.6 626.8,343.8 630.0,343.8 633.2,343.8 636.3,343.2 638.8,340.4 640.9,339.6 643.7,340.0 645.8,343.2 648.9,343.8 652.1,343.8 655.3,343.2 658.4,343.2 660.0,344.3 663.2,344.7 666.3,344.3 669.5,345.8 671.6,351.1 673.7,355.7 675.8,356.9 680.0,356.9 683.2,355.7 687.4,355.9 691.6,355.9 695.8,355.9 700.0,355.9 702.1,355.7 704.2,357.4 707.4,355.7 710.5,354.2 712.6,351.1 714.3,341.6 715.2,335.3 716.8,331.1 718.9,329.6 721.1,327.5 724.2,327.9 727.4,329.6 730.5,328.9 733.7,328.3 736.8,326.2 740.0,323.3 743.2,321.2 746.3,319.1 749.5,317.8 752.6,317.4 755.8,315.7 758.9,314.2 762.1,312.7 765.3,311.5 768.4,309.4 771.6,308.9 774.7,308.3 777.9,308.9 781.1,308.9 784.2,308.5 787.4,309.6 790.5,311.1 793.7,312.1 796.8,312.7 800.0,313.2 803.2,312.7 805.7,310.6 807.8,307.3 809.1,302.2 811.2,298.8 813.7,297.4 816.8,297.8 818.9,299.5 821.7,300.9 825.3,301.2 829.5,301.2" stroke="#FF00FF" stroke-width="2"/><polyline points="94.6,269.4 97.4,269.4 98.8,281.6 100.1,292.1 101.6,295.3 103.7,286.2 105.8,293.2 107.9,292.1 110.4,289.6 112.5,294.6 114.8,290.0 116.1,281.6 117.4,274.8 119.1,283.7 121.2,281.6 123.3,281.2 125.4,281.6 127.5,290.0 128.9,291.1 131.1,283.7 133.2,291.1 135.3,295.3 137.4,288.9 139.5,295.3 142.0,287.9 144.3,294.6 146.8,292.1 149.4,293.2 151.5,295.3 153.6,292.1 156.3,299.5 158.4,292.1 160.5,288.9 163.7,292.1 165.8,284.7 168.3,283.7 170.4,286.8 173.2,281.2 175.9,287.9 178.4,286.8 180.9,281.6 183.7,292.1 185.8,293.2 187.9,291.1 190.0,292.1 192.1,295.9 194.2,290.0 195.9,281.6 197.4,274.8 199.1,286.8 200.5,292.1 203.1,299.5 205.8,299.5 207.5,290.0 208.9,284.7 211.1,292.1 212.7,297.4 214.6,300.5 217.4,304.7 219.5,300.5 221.6,295.3 222.6,292.1 224.7,299.5 226.2,302.6 227.9,295.3 228.9,292.1 230.6,299.5 232.5,302.6 234.8,297.4 236.9,295.3 239.1,300.5 241.6,304.7 243.7,300.5 245.4,299.5 247.9,307.3 249.6,298.4 251.1,281.6 251.6,267 252.0,217.6 253.7,193.5 255.3,193.5 256.4,217.6 257.2,269 257.4,281.6 258.4,295.3 260.5,306.8 262.6,311.1 264.7,302.6 266.8,295.3 268.9,302.6 271.1,310.0 273.2,303.7 275.3,311.1 277.4,316.3 279.5,310.0 281.6,311.1 283.7,313.2 285.8,312.1 288.9,316.3 290.1,316.8 292.2,310.5 294.3,305.3 296.8,307.4 299.4,301.1 301.5,297.9 304.2,302.1 306.3,294.7 308.0,291.6 309.9,297.9 312.6,300.0 315.4,301.1 317.9,303.2 320.0,305.3 321.7,300.0 323.2,297.9 325.3,304.2 327.4,306.3 329.5,304.2 331.6,309.5 333.7,311.6 335.8,309.5 337.9,308.4 340.0,309.5 342.1,301.1 344.2,297.9 346.3,302.1 348.4,296.8 351.2,294.7 353.3,301.1 355.4,304.2 357.5,295.8 360.0,302.1 362.1,293.7 364.2,288.4 366.3,294.7 368.4,297.9 370.9,294.7 373.1,301.1 375.2,303.2 377.3,296.8 379.4,295.4 381.5,301.1 383.6,302.1 385.7,297.9 387.8,296.8 389.9,290.5 392.2,285.7 394.3,291.6 396.2,297.9 398.3,294.7 400.4,287.4 403.2,290.5 405.3,285.3 406.9,283.2 408.8,291.6 410.9,297.9 413.1,289.5 415.2,292.6 417.3,296.8 419.4,294.7 421.5,292.6 424.2,295.8 426.3,290.5 428.4,294.7 430.5,295.8 432.6,291.6 435.4,286.3 437.5,292.6 439.6,288.4 442.1,283.2 444.6,282.1 447.4,277.9 449.5,281.1 451.6,287.4 453.7,288.4 455.8,284.2 457.9,287.4 460.0,293.7 462.1,285.3 463.6,284.2 465.7,292.6 467.8,293.7 470.0,293.2 472.1,296.3 473.8,298.4 475.9,292.1 478.0,288.9 480.1,291.1 482.2,283.7 483.7,278.8 485.8,284.7 487.9,285.8 490.0,280.5 491.5,279.5 493.6,284.7 496.3,283.7 498.4,285.8 500.5,287.9 502.0,290.0 504.1,285.8 506.2,285.2 508.3,287.9 510.4,283.7 512.1,277.4 513.8,274.2 515.3,282.6 516.7,286.8 518.4,285.2 520.5,288.9 522.2,290.0 524.3,283.7 525.8,277.4 527.3,275.3 529.4,285.8 531.5,290.0 533.6,285.8 535.7,282.2 537.8,279.5 539.9,275.3 542.0,277.4 543.7,281.6 545.8,278.4 547.5,275.3 549.6,281.6 551.7,284.7 553.8,279.5 555.9,280.1 558.0,283.7 560.5,279.5 562.6,281.6 564.7,280.5 566.8,278.8 568.9,283.7 571.5,284.7 573.6,280.5 575.3,274.2 576.9,272.1 579.1,277.4 581.2,275.3 583.3,277.4 584.7,282.6 586.2,284.7 588.3,280.5 590.0,279.5 592.1,286.8 593.8,290.0 595.9,283.7 597.4,282.6 598.8,290.0 600.5,287.9 602.6,281.6 604.3,279.5 606.4,284.7 608.5,280.5 610.0,278.4 612.1,282.6 614.2,285.2 616.3,282.2 618.4,279.5 621.2,278.4 623.7,280.5 625.8,282.6 627.9,285.2 630.0,279.5 631.7,277.4 633.8,283.7 635.9,286.8 638.0,282.2 639.5,280.5 641.6,284.7 643.7,281.6 645.8,280.5 647.9,282.6 650.0,280.5 652.1,279.5 654.2,282.6 656.3,284.7 658.4,280.5 660.0,279.5 662.5,282.6 664.6,277.4 666.7,273.2 668.8,279.5 670.9,280.5 673.1,277.4 675.2,280.5 677.3,287.3 679.4,282.6 681.1,278.8 683.2,282.6 685.3,281.6 687.4,278.4 689.5,283.7 691.6,284.7 693.7,279.5 695.8,277.4 697.9,280.5 700.0,278.4 702.1,277.4 703.8,282.6 705.9,287.3 708.0,282.6 710.1,280.5 712.2,283.7 714.3,280.5 715.8,278.8 717.9,282.6 720.0,285.2 722.1,280.5 724.2,277.4 726.3,279.5 728.4,273.2 730.5,272.1 732.6,275.3 734.7,277.4 736.8,273.2 738.9,275.3 741.1,277.4 743.2,270.0 744.6,268.9 746.7,275.3 748.8,274.2 750.9,267.9 752.6,272.1 754.7,279.5 756.4,274.2 758.9,273.2 762.1,273.8 765.3,273.8 766.9,277.4 768.4,281.6 770.5,280.5 772.6,283.7 774.7,287.9 776.8,285.8 778.9,280.5 781.1,284.7 783.2,287.9 785.3,284.3 787.4,285.8 789.5,286.8 791.6,287.9 793.7,285.8 795.8,290.0 797.3,291.1 798.9,283.7 800.6,280.5 802.7,284.7 804.8,279.5 806.9,275.3 808.4,275.3 809.9,283.7 811.6,290.0 813.7,285.8 815.8,287.9 817.9,291.1 820.0,286.8 821.7,285.8 823.8,290.0 825.9,287.9 828.0,285.8 829.5,287.9" stroke="#800000" stroke-width="3.6"/><polyline points="94.6,308.9 97.4,308.5 98.0,299.5 98.8,288.9 100.5,287.9 101.6,295.3 103.1,288.9 104.7,290.0 106.4,284.7 108.5,287.5 110.6,284.1 112.7,283.3 113.6,286.8 115.3,287.9 116.5,295.3 117.8,299.5 119.5,295.3 121.6,294.6 123.7,299.5 125.8,298.8 128.3,293.2 130.0,299.5 131.7,299.5 133.8,288.9 135.3,287.9 137.4,293.2 140.1,288.9 142.2,287.9 143.7,292.1 145.8,288.9 148.9,290.0 151.1,287.9 153.2,289.6 155.3,281.6 157.4,281.6 159.1,290.0 161.2,287.9 162.6,293.2 164.7,295.3 166.8,294.2 168.9,297.4 171.1,293.2 173.2,294.2 176.3,293.2 178.4,294.2 180.9,298.8 182.6,292.1 184.7,288.9 186.8,292.1 188.9,287.9 191.1,286.2 193.2,288.9 194.8,287.9 196.3,295.3 197.4,302.6 198.6,291.1 199.9,288.9 201.6,291.1 203.7,284.7 205.4,283.7 206.8,290.0 208.9,292.1 210.4,288.9 211.7,281.6 213.2,277.4 215.3,278.4 217.4,276.9 219.5,276.3 221.6,281.6 223.7,284.7 225.8,277.4 227.9,281.6 230.0,286.8 232.7,276.9 235.3,283.7 237.4,284.7 239.9,276.3 242.0,275.3 244.1,281.6 246.8,273.2 248.9,279.5 250.4,287.9 251.6,290 252,354 253.4,419 254.6,388 256,358 257,300 257.4,232 259.5,218.7 261.6,216.6 263.7,221.8 265.8,228.2 267.3,233.4 268.9,225.0 270.0,221.8 272.1,227.1 273.6,230.3 275.3,225.0 276.9,222.5 279.5,229.6 281.6,225.0 283.7,220.8 286.8,223.9 290.0,218.7 291.6,220.3 293.1,226.6 295.8,227.6 297.9,226.6 299.4,232.9 301.1,238.2 303.2,233.9 304.8,233.9 306.3,240.3 307.8,240.3 309.5,235.0 311.6,233.9 313.7,236.1 315.4,238.2 317.9,235.0 319.6,233.9 321.7,237.1 323.2,238.2 325.3,231.8 327.4,231.8 328.8,235.0 330.5,229.7 332.6,228.3 335.2,228.3 337.3,229.1 340.0,228.3 341.5,232.9 343.2,240.3 345.3,237.1 347.4,236.1 349.5,240.3 351.6,237.1 353.3,233.9 355.4,235.0 356.8,240.3 358.9,239.6 361.1,239.2 363.2,245.1 365.3,244.5 366.7,239.6 368.8,240.3 370.9,245.1 373.1,242.4 374.7,242.4 376.8,245.5 378.9,247.6 381.1,241.3 382.7,240.9 384.2,244.5 386.3,248.7 389.5,249.3 391.2,257.1 393.3,256.1 394.7,246.6 396.2,250.8 397.9,253.9 400.0,257.7 403.2,257.1 405.3,258.2 406.9,259.8 408.8,249.7 410.9,249.3 412.6,255.0 414.7,257.1 416.8,255.0 420.0,255.0 422.1,252.9 424.2,252.3 426.3,256.1 428.4,255.0 429.9,252.9 432.0,255.0 433.7,258.2 435.4,260.7 437.5,256.1 438.9,256.1 441.1,261.3 443.2,264.1 445.3,263.4 447.4,267.0 449.5,265.5 450.9,259.2 453.1,258.2 454.7,262.4 456.8,261.3 458.9,253.5 460.6,255.0 462.1,261.3 463.6,263.4 465.3,255.0 467.4,255.0 469.5,257.1 470.0,254.2 472.1,250.0 474.2,249.4 476.3,255.3 478.8,256.9 480.9,256.3 482.6,264.7 484.3,264.7 485.8,258.4 487.3,256.3 489.4,259.5 491.5,260.5 493.6,258.4 495.7,257.8 497.4,262.6 499.1,263.7 501.2,258.4 502.6,257.8 504.7,261.6 506.2,262.6 508.3,259.5 510.0,261.6 511.7,267.9 513.2,271.1 514.6,264.7 516.3,261.6 518.0,264.7 519.5,264.1 520.9,258.4 522.6,256.9 524.3,261.6 525.8,265.8 527.3,266.2 529.4,257.4 531.1,255.3 532.7,258.4 534.2,262.6 536.3,265.8 538.4,270.0 540.5,272.1 542.6,267.9 544.7,266.8 546.2,271.1 547.9,272.1 549.6,264.7 551.1,263.7 553.2,267.9 555.3,268.3 556.7,263.7 558.4,264.7 560.5,268.9 562.6,268.9 564.3,263.7 565.8,262.0 567.3,265.8 568.9,266.8 571.1,261.6 572.7,261.2 574.2,264.7 575.7,269.6 577.4,271.1 579.1,268.9 580.5,271.1 582.6,274.2 584.7,266.8 586.2,265.8 587.9,268.9 589.6,271.1 591.1,264.7 592.5,263.3 594.6,267.9 596.3,271.1 598.4,268.9 600.1,270.0 601.6,274.2 603.1,275.9 605.2,271.1 606.8,271.1 608.5,273.2 610.6,274.2 612.7,267.9 614.8,267.5 616.3,272.1 617.8,277.4 619.9,275.3 622.0,274.2 624.1,273.2 626.2,268.9 628.3,267.9 630.0,272.1 632.1,275.3 634.2,271.1 636.3,270.0 638.4,272.1 640.1,273.2 641.6,271.1 643.7,272.1 645.2,277.4 647.3,277.4 648.9,276.3 650.6,279.5 652.7,280.5 654.8,273.2 656.3,272.1 658.4,275.3 660.0,270.0 662.1,271.1 664.2,277.4 666.3,279.5 668.4,275.3 670.5,274.2 672.6,274.6 674.7,271.1 676.8,267.9 678.9,270.0 681.1,274.2 683.2,271.1 684.8,272.1 686.9,276.7 689.1,272.1 691.2,270.0 693.3,274.2 695.4,275.9 697.5,273.2 699.6,273.2 701.7,277.4 703.8,268.9 705.3,267.5 707.4,271.1 709.5,271.1 711.6,266.8 713.7,267.5 715.2,271.1 717.3,266.8 719.4,264.7 721.5,270.0 723.6,273.2 725.7,270.0 727.8,271.1 729.9,275.3 732.0,277.4 734.1,275.9 736.2,279.5 738.3,277.4 740.4,276.3 742.5,280.5 744.6,278.8 746.7,275.3 748.8,277.4 750.9,281.6 752.6,277.4 754.3,270.0 756.4,271.1 758.5,272.1 761.1,272.1 764.2,271.7 766.3,271.1 768.4,267.5 770.5,267.9 772.6,271.1 774.7,264.7 776.8,264.1 778.9,267.9 781.1,263.7 783.2,262.6 785.3,265.8 787.4,264.7 789.5,261.6 791.6,262.6 793.7,263.7 795.8,261.2 797.9,261.6 800.0,265.8 802.1,266.8 804.2,267.9 806.3,271.1 807.8,267.9 809.1,257.4 811.6,256.9 814.7,257.4 816.8,256.3 818.9,256.9 821.1,260.5 822.5,256.3 824.6,255.7 826.3,259.5 828.4,261.2 829.5,261.2" stroke="#00FFFF" stroke-width="2"/></g></svg>
<div class="t n" style="left:147px;top:423px;">3</div>
<div class="t n" style="left:193px;top:423px;">4</div>
<div class="t n" style="left:239px;top:423px;">5</div>
<div class="t n" style="left:285px;top:423px;">6</div>
<div class="t n" style="left:331px;top:423px;">7</div>
<div class="t n" style="left:377px;top:423px;">8</div>
<div class="t n" style="left:423px;top:423px;">9</div>
<div class="t n" style="left:469px;top:423px;">10</div>
<div class="t n" style="left:515px;top:423px;">11</div>
<div class="t n" style="left:561px;top:423px;">12</div>
<div class="t n" style="left:605px;top:423px;">13</div>
<div class="t n" style="left:651px;top:423px;">14</div>
<div class="t n" style="left:697px;top:423px;">15</div>
<div class="t n" style="left:743px;top:423px;">16</div>
<div class="t n" style="left:789px;top:423px;">17</div>
<div class="abs" style="left:93px;top:441px;width:773px;height:17px;box-sizing:border-box;background:#fff;border-top:1px solid #808080;border-bottom:1px solid #B8B0A0;"></div>
<div class="btn" style="left:93px;top:441px;width:16px;height:16px;"></div>
<svg style="left:98px;top:445px" width="5" height="8" viewBox="0 0 5 8"><path d="M4.500 0 V8 L0.500 4 Z" fill="#000"/></svg>
<div class="btn" style="left:109px;top:441px;width:434px;height:16px;"></div>
<div class="btn" style="left:850px;top:441px;width:16px;height:16px;"></div>
<svg style="left:856px;top:445px" width="5" height="8" viewBox="0 0 5 8"><path d="M0.500 0 V8 L4.500 4 Z" fill="#000"/></svg>
</div></body></html>
